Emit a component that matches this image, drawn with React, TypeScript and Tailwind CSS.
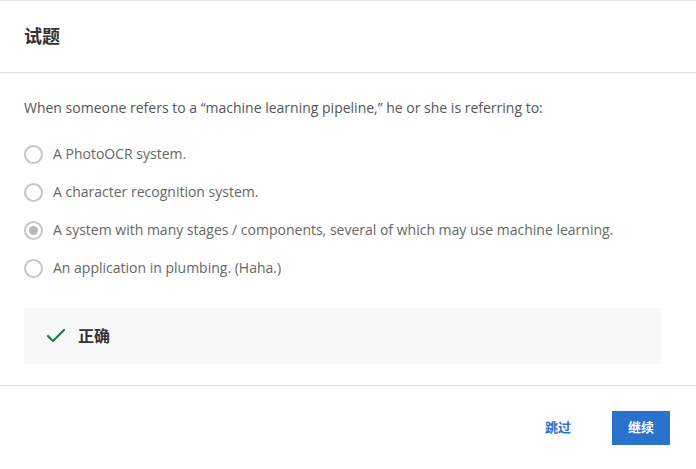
import { Check } from "lucide-react";

const options = [
  { text: "A PhotoOCR system.", checked: false },
  { text: "A character recognition system.", checked: false },
  {
    text: "A system with many stages / components, several of which may use machine learning.",
    checked: true,
  },
  { text: "An application in plumbing. (Haha.)", checked: false },
];

const Radio = ({ checked }: { checked: boolean }) => (
  <span className="flex h-[19px] w-[19px] shrink-0 items-center justify-center rounded-full border-2 border-[#c6c6c6] bg-white">
    {checked && <span className="h-[9px] w-[9px] rounded-full bg-[#b8b8b8]" />}
  </span>
);

export default function App() {
  return (
    <div className="flex h-[469px] w-[696px] flex-col border-t border-[#e5e5e5] bg-white font-['Open_Sans','Noto_Sans_CJK_SC',sans-serif] text-[#333]">
      <header className="flex h-[72px] items-center border-b border-[#e0e0e0] px-6">
        <h1 className="text-[18px] font-bold text-[#333]">试题</h1>
      </header>
      <main className="flex flex-col px-6 pt-[25px]">
        <p className="text-[14px] leading-[20px] text-[#555]">
          When someone refers to a “machine learning pipeline,” he or she is referring to:
        </p>
        <div className="mt-[26px] flex flex-col gap-[18px]">
          {options.map((o) => (
            <label key={o.text} className="flex h-[20px] items-center gap-[10px]">
              <Radio checked={o.checked} />
              <span className="text-[14px] leading-[20px] text-[#666]">{o.text}</span>
            </label>
          ))}
        </div>
        <div className="mt-[30px] flex h-[56px] w-[637px] items-center gap-[10px] bg-[#f6f9f8] pl-[20px]">
          <Check className="h-[24px] w-[24px] text-[#1f7a4c]" strokeWidth={2.2} />
          <span className="text-[16px] font-semibold text-[#333]">正确</span>
        </div>
      </main>
      <footer className="mt-[21px] flex flex-1 items-center justify-end gap-[41px] border-t border-[#e0e0e0] pr-[26px]">
        <button className="text-[13px] font-bold text-[#2a73cc]">跳过</button>
        <button className="h-[34px] w-[58px] bg-[#2a73cc] text-[13px] font-bold text-white">继续</button>
      </footer>
    </div>
  );
}
